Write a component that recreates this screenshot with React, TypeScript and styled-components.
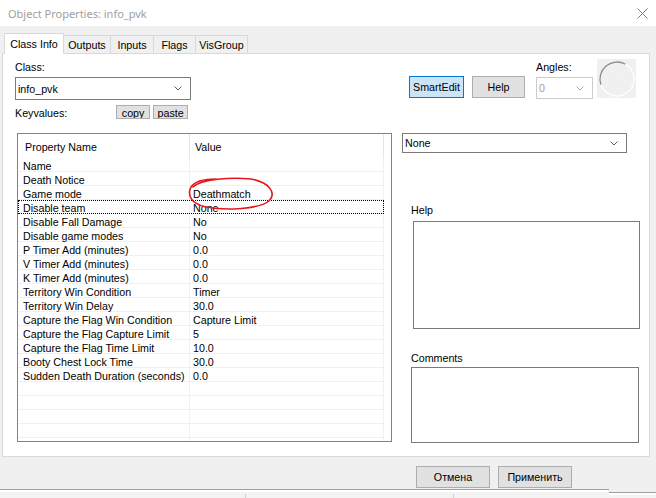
import styled, { createGlobalStyle } from "styled-components";

const GlobalStyle = createGlobalStyle`
  html, body {
    margin: 0;
    padding: 0;
    background: #f0f0f0;
  }
  body {
    font-family: "Liberation Sans", Arial, sans-serif;
    font-size: 10.7px;
    color: #000;
  }
`;

const Window = styled.div`
  width: 656px;
  height: 498px;
  overflow: hidden;
  background: #f0f0f0;
  display: flex;
  flex-direction: column;
`;

const TitleBar = styled.div`
  height: 26px;
  flex-shrink: 0;
  background: #fff;
  display: flex;
  align-items: center;
  justify-content: space-between;
  padding: 0 8px;
`;

const Title = styled.span`
  font-family: "Noto Sans", "Liberation Sans", sans-serif;
  font-size: 11px;
  color: #a0a0a0;
`;

const TabStrip = styled.div`
  display: flex;
  align-items: flex-end;
  height: 20px;
  margin-top: 7px;
  padding-left: 4px;
  position: relative;
  z-index: 1;
`;

const Tab = styled.div<{ $w: number; $active?: boolean }>`
  box-sizing: border-box;
  width: ${(p) => p.$w}px;
  height: ${(p) => (p.$active ? 21 : 18)}px;
  margin-left: -1px;
  margin-bottom: ${(p) => (p.$active ? -1 : 0)}px;
  background: ${(p) => (p.$active ? "#fff" : "#f0f0f0")};
  border: 1px solid #d9d9d9;
  border-bottom: none;
  display: flex;
  align-items: center;
  justify-content: center;
  padding-top: ${(p) => (p.$active ? 0 : 1)}px;
  &:first-child {
    margin-left: 0;
  }
`;

const Panel = styled.div`
  box-sizing: border-box;
  margin-left: 2px;
  width: 648px;
  height: 404px;
  flex-shrink: 0;
  background: #fff;
  border: 1px solid #d9d9d9;
`;

const TopRow = styled.div`
  height: 79px;
  display: flex;
  align-items: flex-start;
  padding-left: 12px;
`;

const ClassCol = styled.div`
  width: 176px;
  margin-top: 7px;
  display: flex;
  flex-direction: column;
`;

const Label = styled.div<{ $ml?: number; $mt?: number }>`
  line-height: 13px;
  height: 13px;
  margin-left: ${(p) => p.$ml ?? 0}px;
  margin-top: ${(p) => p.$mt ?? 0}px;
`;

const Combo = styled.div<{ $w: number; $h: number; $mt?: number; $disabled?: boolean }>`
  box-sizing: border-box;
  width: ${(p) => p.$w}px;
  height: ${(p) => p.$h}px;
  margin-top: ${(p) => p.$mt ?? 0}px;
  border: 1px solid ${(p) => (p.$disabled ? "#cccccc" : "#7a7a7a")};
  background: #fff;
  color: ${(p) => (p.$disabled ? "#a0a0a0" : "#000")};
  display: flex;
  align-items: center;
  justify-content: space-between;
  padding: 0 8px 0 2px;
`;

const KeyRow = styled.div`
  display: flex;
  align-items: center;
  margin-top: 5px;
  height: 14px;
`;

const KeyLabel = styled.span`
  width: 102px;
  padding-top: 2px;
`;

const MiniButton = styled.div`
  box-sizing: border-box;
  width: 35px;
  height: 14px;
  margin-right: 3px;
  background: #e1e1e1;
  border: 1px solid #adadad;
  text-align: center;
  line-height: 14px;
  overflow: hidden;
`;

const ButtonGroup = styled.div`
  display: flex;
  gap: 8px;
  margin-left: 218px;
  margin-top: 22px;
`;

const Button = styled.div<{ $w: number; $default?: boolean }>`
  box-sizing: border-box;
  width: ${(p) => p.$w}px;
  height: 22px;
  background: ${(p) => (p.$default ? "#cce4f7" : "#e1e1e1")};
  border: 1px solid ${(p) => (p.$default ? "#0078d7" : "#adadad")};
  display: flex;
  align-items: center;
  justify-content: center;
`;

const AnglesCol = styled.div`
  display: flex;
  flex-direction: column;
  margin-left: 11px;
  margin-top: 7px;
`;

const AngleBox = styled.div`
  width: 39px;
  height: 39px;
  margin-left: 4px;
  margin-top: 5px;
  background: #f0f0f0;
`;

const MainRow = styled.div`
  display: flex;
  padding-left: 14px;
`;

const Table = styled.div`
  box-sizing: border-box;
  width: 375px;
  height: 309px;
  border: 1px solid #828282;
  background: #fff;
  position: relative;
  overflow: hidden;
`;

const HeaderRow = styled.div`
  display: flex;
  height: 24px;
`;

const HeaderCell = styled.div<{ $w: number; $pl: number }>`
  box-sizing: border-box;
  width: ${(p) => p.$w}px;
  padding-left: ${(p) => p.$pl}px;
  padding-top: 1px;
  line-height: 24px;
  border-right: 1px solid #e5e5e5;
`;

const Row = styled.div<{ $focused?: boolean }>`
  box-sizing: border-box;
  display: flex;
  width: 366px;
  height: 14px;
  border-bottom: 1px solid #f0f0f0;
  outline: ${(p) => (p.$focused ? "1px dotted #000" : "none")};
  outline-offset: -1px;
`;

const Cell = styled.div<{ $w: number; $pl: number }>`
  box-sizing: border-box;
  width: ${(p) => p.$w}px;
  height: 13px;
  padding-left: ${(p) => p.$pl}px;
  padding-top: 2px;
  line-height: 12px;
  white-space: nowrap;
  border-right: 1px solid #f0f0f0;
`;

const Scribble = styled.svg`
  position: absolute;
  left: 168px;
  top: 41px;
`;

const SideCol = styled.div`
  display: flex;
  flex-direction: column;
  margin-left: 10px;
`;

const TextBox = styled.div<{ $w: number; $h: number; $ml: number; $mt: number }>`
  box-sizing: border-box;
  width: ${(p) => p.$w}px;
  height: ${(p) => p.$h}px;
  margin-left: ${(p) => p.$ml}px;
  margin-top: ${(p) => p.$mt}px;
  border: 1px solid #7a7a7a;
  background: #fff;
`;

const FooterRow = styled.div`
  display: flex;
  gap: 8px;
  margin-top: 9px;
  padding-left: 416px;
`;

const BottomStrip = styled.div`
  margin-top: 1px;
  display: flex;
  flex: 1;
`;

const StripPart = styled.div<{ $w: number; $line: number }>`
  width: ${(p) => p.$w}px;
  flex-shrink: 0;
  box-sizing: border-box;
  border-top: 1px solid #a0a0a0;
  margin-top: ${(p) => p.$line}px;
  background: linear-gradient(#ffffff 0 2px, #f3f3f3 2px);
  position: relative;
`;

const StripTick = styled.span<{ $x: number }>`
  position: absolute;
  left: ${(p) => p.$x}px;
  top: 4px;
  width: 1px;
  height: 10px;
  background: #d0d0d0;
`;

const rows: [string, string][] = [
  ["Name", ""],
  ["Death Notice", ""],
  ["Game mode", "Deathmatch"],
  ["Disable team", "None"],
  ["Disable Fall Damage", "No"],
  ["Disable game modes", "No"],
  ["P Timer Add (minutes)", "0.0"],
  ["V Timer Add (minutes)", "0.0"],
  ["K Timer Add (minutes)", "0.0"],
  ["Territory Win Condition", "Timer"],
  ["Territory Win Delay", "30.0"],
  ["Capture the Flag Win Condition", "Capture Limit"],
  ["Capture the Flag Capture Limit", "5"],
  ["Capture the Flag Time Limit", "10.0"],
  ["Booty Chest Lock Time", "30.0"],
  ["Sudden Death Duration (seconds)", "0.0"],
  ["", ""],
  ["", ""],
  ["", ""],
  ["", ""],
  ["", ""],
];

function Chevron({ light }: { light?: boolean }) {
  return (
    <svg width="8" height="5" viewBox="0 0 8 5">
      <polyline
        points="0.5,0.5 4,4 7.5,0.5"
        fill="none"
        stroke={light ? "#b0b0b0" : "#606060"}
        strokeWidth="1"
      />
    </svg>
  );
}

export default function App() {
  return (
    <Window>
      <GlobalStyle />
      <TitleBar>
        <Title>Object Properties: info_pvk</Title>
        <svg width="11" height="11" viewBox="0 0 11 11">
          <path d="M0.5 0.5 L10.5 10.5 M10.5 0.5 L0.5 10.5" stroke="#808080" strokeWidth="1" />
        </svg>
      </TitleBar>

      <TabStrip>
        <Tab $w={60} $active>
          Class Info
        </Tab>
        <Tab $w={48}>Outputs</Tab>
        <Tab $w={44}>Inputs</Tab>
        <Tab $w={43}>Flags</Tab>
        <Tab $w={53}>VisGroup</Tab>
      </TabStrip>

      <Panel>
        <TopRow>
          <ClassCol>
            <Label>Class:</Label>
            <Combo $w={176} $h={23} $mt={3}>
              <span>info_pvk</span>
              <Chevron />
            </Combo>
            <KeyRow>
              <KeyLabel>Keyvalues:</KeyLabel>
              <MiniButton>copy</MiniButton>
              <MiniButton>paste</MiniButton>
            </KeyRow>
          </ClassCol>

          <ButtonGroup>
            <Button $w={55} $default>
              SmartEdit
            </Button>
            <Button $w={53}>Help</Button>
          </ButtonGroup>

          <AnglesCol>
            <Label>Angles:</Label>
            <Combo $w={57} $h={22} $mt={3} $disabled>
              <span>0</span>
              <Chevron light />
            </Combo>
          </AnglesCol>

          <AngleBox>
            <svg width="39" height="39" viewBox="0 0 39 39">
              <path d="M4 25.8 A17 17 0 0 1 28.5 5.3" fill="none" stroke="#8c8c8c" strokeWidth="1.3" />
              <path d="M28.5 5.3 A17 17 0 1 1 4 25.8" fill="none" stroke="#ffffff" strokeWidth="1.3" />
              <rect x="19" y="19" width="1" height="1" fill="#ffffff" />
            </svg>
          </AngleBox>
        </TopRow>

        <MainRow>
          <Table>
            <HeaderRow>
              <HeaderCell $w={172} $pl={7}>
                Property Name
              </HeaderCell>
              <HeaderCell $w={194} $pl={5}>
                Value
              </HeaderCell>
            </HeaderRow>
            {rows.map(([name, value], i) => (
              <Row key={i} $focused={name === "Disable team"}>
                <Cell $w={172} $pl={5}>
                  {name}
                </Cell>
                <Cell $w={194} $pl={3}>
                  {value}
                </Cell>
              </Row>
            ))}
            <Scribble width="92" height="38" viewBox="0 0 92 38">
              <path
                d="M7 12 C15 4 45 2 65 4 C83 7 91 18 83 26 C73 34 40 36 20 32 C5 29 1 20 5 12 C9 6 20 4 30 4"
                fill="none"
                stroke="#e8141b"
                strokeWidth="1.6"
                strokeLinecap="round"
              />
            </Scribble>
          </Table>

          <SideCol>
            <Combo $w={225} $h={20}>
              <span>None</span>
              <Chevron />
            </Combo>
            <Label $ml={9} $mt={51}>
              Help
            </Label>
            <TextBox $w={227} $h={108} $ml={11} $mt={4} />
            <Label $ml={9} $mt={23}>
              Comments
            </Label>
            <TextBox $w={228} $h={76} $ml={9} $mt={2} />
          </SideCol>
        </MainRow>
      </Panel>

      <FooterRow>
        <Button $w={74}>Отмена</Button>
        <Button $w={74}>Применить</Button>
      </FooterRow>

      <BottomStrip>
        <StripPart $w={609} $line={0}>
          <StripTick $x={245} />
          <StripTick $x={453} />
        </StripPart>
        <StripPart $w={47} $line={3} />
      </BottomStrip>
    </Window>
  );
}
